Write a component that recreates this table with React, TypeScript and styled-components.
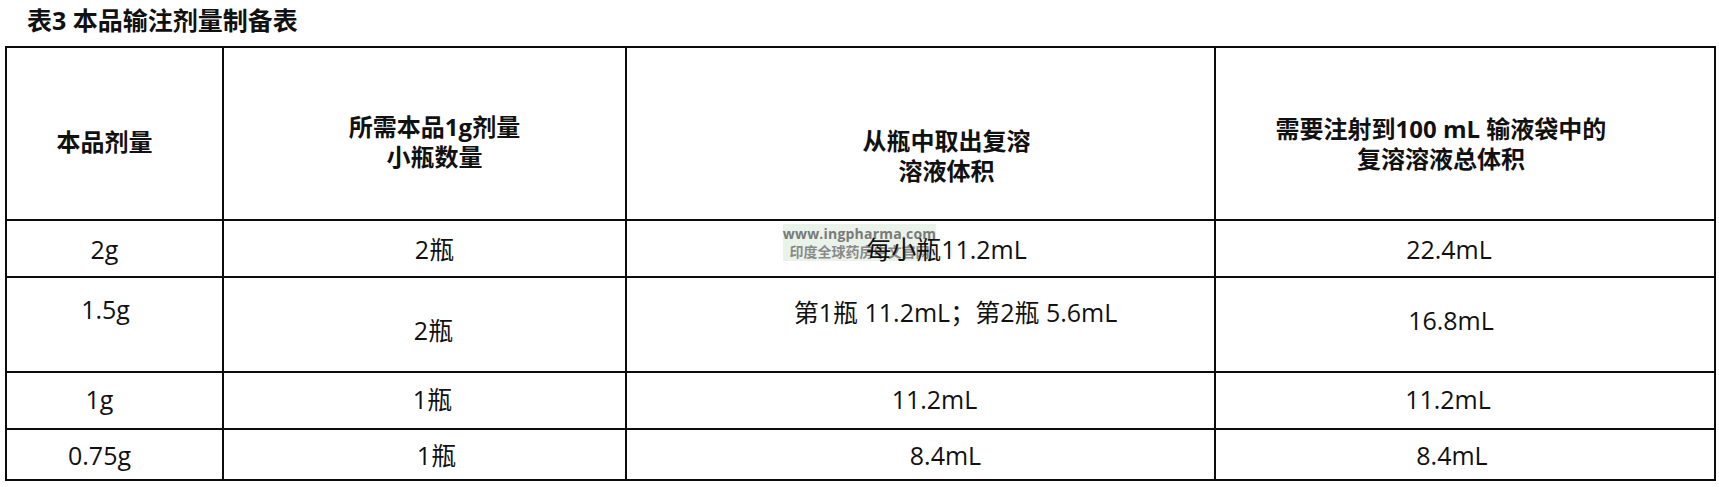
import React from 'react';
import styled, { createGlobalStyle } from 'styled-components';

const GlobalStyle = createGlobalStyle`
  html, body {
    margin: 0;
    padding: 0;
    background: #ffffff;
  }
  body {
    font-family: "Open Sans", "Noto Sans CJK SC", sans-serif;
    color: #111111;
  }
`;

const Page = styled.div`
  width: 1719px;
  padding: 0 5px;
  box-sizing: border-box;
`;

const Title = styled.h3`
  margin: 0;
  height: 46px;
  padding-left: 22px;
  line-height: 40px;
  font-size: 25px;
  font-weight: 700;
  color: #111111;
  font-family: "Open Sans", "Noto Sans CJK SC", sans-serif;
`;

const TableWrap = styled.div`
  position: relative;
`;

const Table = styled.table`
  position: relative;
  width: 1709px;
  border-collapse: collapse;
  table-layout: fixed;
  border: 2px solid #0c0c0c;
  background: transparent;
`;

const Row = styled.tr<{ $h: number }>`
  height: ${p => p.$h}px;
`;

const Cell = styled.td<{ $dx: number; $dy: number; $head?: boolean }>`
  border: 2px solid #0c0c0c;
  text-align: center;
  vertical-align: middle;
  box-sizing: border-box;
  padding: ${p => Math.max(0, p.$dy * 2)}px ${p => Math.max(0, -p.$dx * 2)}px
    ${p => Math.max(0, -p.$dy * 2)}px ${p => Math.max(0, p.$dx * 2)}px;
  font-size: ${p => (p.$head ? 24 : 25)}px;
  font-weight: ${p => (p.$head ? 700 : 400)};
  line-height: ${p => (p.$head ? 30 : 28)}px;
  white-space: nowrap;
  color: #111111;
`;

const Line = styled.div``;

// watermark sits underneath the table text
const Watermark = styled.div`
  position: absolute;
  left: 778px;
  top: 178px;
  width: 153px;
  height: 37px;
  background: #eaf3ea;
  display: flex;
  flex-direction: column;
  align-items: center;
  justify-content: center;
  gap: 1px;
  pointer-events: none;
`;

const WmUrl = styled.span`
  font-size: 14px;
  line-height: 16px;
  font-weight: 700;
  color: #7a7a7a;
  font-family: "Open Sans", sans-serif;
  letter-spacing: 0.2px;
`;

const WmName = styled.span`
  font-size: 14px;
  line-height: 17px;
  font-weight: 700;
  color: #8a8a8a;
  font-family: "Noto Sans CJK SC", sans-serif;
`;

type CellData = { lines: string[]; dx: number; dy: number };

const header: CellData[] = [
  { lines: ['本品剂量'], dx: -10, dy: 8 },
  { lines: ['所需本品1g剂量', '小瓶数量'], dx: 10, dy: 8 },
  { lines: ['从瓶中取出复溶', '溶液体积'], dx: 26, dy: 22 },
  { lines: ['需要注射到100 mL 输液袋中的', '复溶溶液总体积'], dx: -24, dy: 10 },
];

const rows: { h: number; cells: CellData[] }[] = [
  {
    h: 57,
    cells: [
      { lines: ['2g'], dx: -10, dy: 0 },
      { lines: ['2瓶'], dx: 10, dy: 0 },
      { lines: ['每小瓶11.2mL'], dx: 26, dy: 0 },
      { lines: ['22.4mL'], dx: -16, dy: 0 },
    ],
  },
  {
    h: 95,
    cells: [
      { lines: ['1.5g'], dx: -9, dy: -16 },
      { lines: ['2瓶'], dx: 9, dy: 5 },
      { lines: ['第1瓶 11.2mL；第2瓶 5.6mL'], dx: 35, dy: -13 },
      { lines: ['16.8mL'], dx: -14, dy: -5 },
    ],
  },
  {
    h: 57,
    cells: [
      { lines: ['1g'], dx: -15, dy: -2 },
      { lines: ['1瓶'], dx: 8, dy: -2 },
      { lines: ['11.2mL'], dx: 14, dy: -2 },
      { lines: ['11.2mL'], dx: -17, dy: -2 },
    ],
  },
  {
    h: 51,
    cells: [
      { lines: ['0.75g'], dx: -15, dy: 0 },
      { lines: ['1瓶'], dx: 12, dy: 0 },
      { lines: ['8.4mL'], dx: 25, dy: 0 },
      { lines: ['8.4mL'], dx: -13, dy: 0 },
    ],
  },
];

const colWidths = [217, 403, 589, 500];

const App: React.FC = () => {
  return (
    <Page>
      <GlobalStyle />
      <Title>表3 本品输注剂量制备表</Title>
      <TableWrap>
        <Watermark>
          <WmUrl>www.ingpharma.com</WmUrl>
          <WmName>印度全球药房中文官网</WmName>
        </Watermark>
        <Table>
          <colgroup>
            {colWidths.map((w, i) => (
              <col key={i} style={{ width: w }} />
            ))}
          </colgroup>
          <tbody>
            <Row $h={173}>
              {header.map((c, i) => (
                <Cell key={i} $head $dx={c.dx} $dy={c.dy}>
                  {c.lines.map((l, j) => (
                    <Line key={j}>{l}</Line>
                  ))}
                </Cell>
              ))}
            </Row>
            {rows.map((r, i) => (
              <Row key={i} $h={r.h}>
                {r.cells.map((c, j) => (
                  <Cell key={j} $dx={c.dx} $dy={c.dy}>
                    {c.lines[0]}
                  </Cell>
                ))}
              </Row>
            ))}
          </tbody>
        </Table>
      </TableWrap>
    </Page>
  );
};

export default App;
